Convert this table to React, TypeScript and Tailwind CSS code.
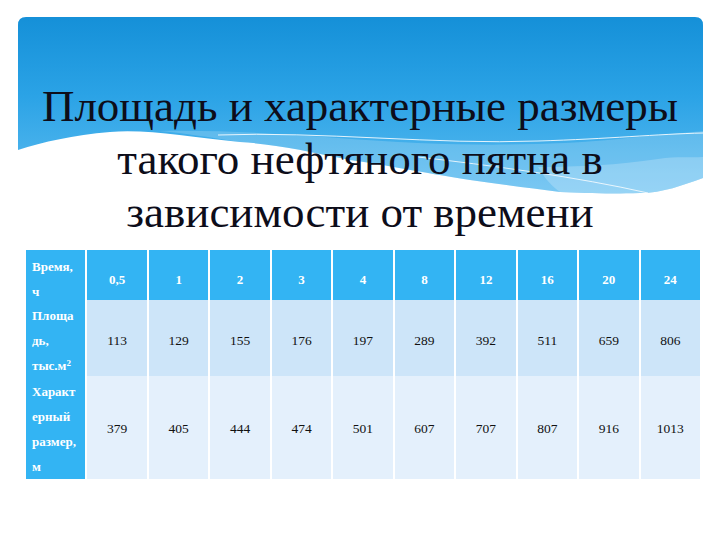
import React from "react";

const hours = ["0,5", "1", "2", "3", "4", "8", "12", "16", "20", "24"];
const area = ["113", "129", "155", "176", "197", "289", "392", "511", "659", "806"];
const size = ["379", "405", "444", "474", "501", "607", "707", "807", "916", "1013"];

const Banner: React.FC = () => (
  <svg
    className="absolute left-[18px] top-[17px]"
    width="685"
    height="185"
    viewBox="0 0 685 185"
  >
    <defs>
      <linearGradient id="sky" x1="0" y1="0" x2="0" y2="1">
        <stop offset="0" stopColor="#1590d8" />
        <stop offset="0.45" stopColor="#2ba3e6" />
        <stop offset="1" stopColor="#5dbcf0" />
      </linearGradient>
    </defs>
    <path
      d="M0 8 Q0 0 8 0 H677 Q685 0 685 8 V161 C665 168 645 176 622 176 C590 177 565 176 542 175 C510 171 480 167 452 163 C400 155 370 148 332 143 C290 134 255 127 222 125 C170 120 130 112 92 115 C55 118 25 125 0 133 Z"
      fill="url(#sky)"
    />
    <path
      d="M140 114 C230 112 320 122 400 126 C470 129 540 128 600 122 C640 118 665 116 685 114 V161 C665 168 645 176 622 176 C590 177 565 176 542 175 C510 171 480 167 452 163 C400 155 370 148 332 143 C290 134 255 127 222 125 C190 120 165 116 140 114 Z"
      fill="#ffffff"
      fillOpacity="0.18"
    />
    <path
      d="M520 150 C560 150 600 148 640 142 C660 139 672 141 685 140 V161 C665 168 645 176 622 176 C590 177 565 176 542 175 C530 166 525 158 520 150 Z"
      fill="#ffffff"
      fillOpacity="0.22"
    />
    <path
      d="M200 118 C300 114 420 128 520 124 C590 122 640 117 685 116"
      stroke="#ffffff"
      strokeOpacity="0.85"
      strokeWidth="1"
      fill="none"
    />
    <path
      d="M400 140 C470 148 560 160 630 176"
      stroke="#ffffff"
      strokeOpacity="0.8"
      strokeWidth="1"
      fill="none"
    />
  </svg>
);

const App: React.FC = () => {
  return (
    <div className="relative w-[720px] h-[540px] bg-white overflow-hidden font-['Liberation_Serif','Times_New_Roman',serif]">
      <Banner />
      <h1 className="relative pt-[80px] text-center text-[45px] leading-[53px] font-normal text-[#0d0d1a] font-['Liberation_Serif','Times_New_Roman',serif]">
        Площадь и характерные размеры
        <br />
        такого нефтяного пятна в
        <br />
        зависимости от времени
      </h1>

      <div className="relative ml-[26px] mt-[11px] w-[674px] flex flex-col gap-y-[2px] font-['Liberation_Serif','Times_New_Roman',serif]">
        <div className="grid grid-cols-[repeat(11,minmax(0,1fr))] gap-x-[2px] h-[48px]">
          <div className="bg-[#33b4f3] pl-[6px] pt-[4px] text-[13px] leading-[25px] font-bold text-white">
            Время,
            <br />ч
          </div>
          {hours.map((h) => (
            <div
              key={h}
              className="bg-[#33b4f3] flex items-center justify-center pt-[6px] text-[13px] font-bold text-white"
            >
              {h}
            </div>
          ))}
        </div>

        <div className="grid grid-cols-[repeat(11,minmax(0,1fr))] gap-x-[2px] h-[75px]">
          <div className="bg-[#33b4f3] pl-[6px] pt-[3px] text-[13px] leading-[25px] font-bold text-white">
            Площа
            <br />
            дь,
            <br />
            тыс.м<sup className="text-[9px]">2</sup>
          </div>
          {area.map((v) => (
            <div
              key={v}
              className="bg-[#cde5f9] flex items-center justify-center pt-[4px] text-[13.5px] text-[#111]"
            >
              {v}
            </div>
          ))}
        </div>

        <div className="grid grid-cols-[repeat(11,minmax(0,1fr))] gap-x-[2px] h-[99px] -mt-[1px]">
          <div className="bg-[#33b4f3] pl-[6px] pt-[3px] text-[13px] leading-[25px] font-bold text-white">
            Характ
            <br />
            ерный
            <br />
            размер,
            <br />м
          </div>
          {size.map((v) => (
            <div
              key={v}
              className="bg-[#e4f0fc] flex items-center justify-center pt-[4px] text-[13.5px] text-[#111]"
            >
              {v}
            </div>
          ))}
        </div>
      </div>
    </div>
  );
};

export default App;
